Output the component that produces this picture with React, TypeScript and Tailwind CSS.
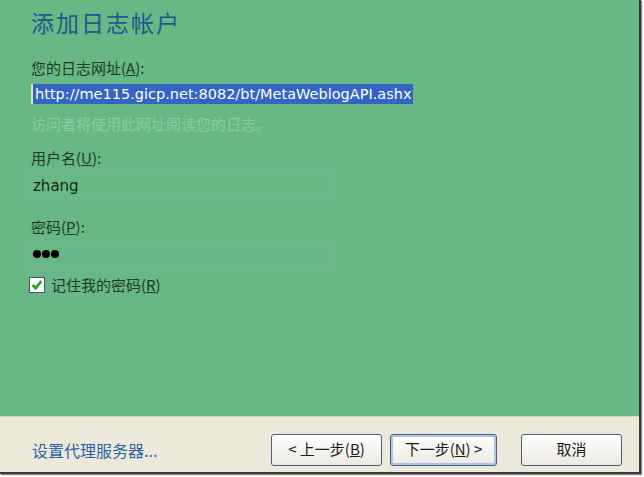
export default function App() {
  const font = { fontFamily: '"Noto Sans CJK SC", "Liberation Sans", sans-serif' };
  return (
    <div className="w-[644px] h-[477px] bg-white overflow-hidden" style={font}>
      <div className="w-[641px] h-[474px] flex flex-col border-r-2 border-b-2 border-[#3a3a3a] shadow-[1px_1px_1px_#888]">
        <div className="h-[416px] bg-[#68b886] pl-[31px] pt-[4px] flex flex-col">
          <h1 className="text-[23px] leading-[36px] text-[#1d5a8c] tracking-[2px]">添加日志帐户</h1>
          <div className="mt-[18px] text-[15px] leading-[20px] text-[#1e3a24]">
            您的日志网址(<span className="underline">A</span>):
          </div>
          <div className="mt-[6px] flex">
            <span className="bg-[#3464c4] text-white leading-[20px] pl-[2px] pr-[1px] border-l-2 border-[#e5e8a0]" style={{ fontFamily: '"DejaVu Sans", sans-serif', fontSize: '14.5px' }}>
              http://me115.gicp.net:8082/bt/MetaWeblogAPI.ashx
            </span>
          </div>
          <div className="mt-[10px] text-[15px] leading-[20px] text-[#8ccc9e]">访问者将使用此网址阅读您的日志。</div>
          <div className="mt-[14px] text-[15px] leading-[20px] text-[#1e3a24]">
            用户名(<span className="underline">U</span>):
          </div>
          <div className="mt-[4px] -ml-[4px] w-[306px] h-[28px] border border-[#74b0a0] flex items-center pl-[5px] text-[15px] text-[#15261a]" style={{ fontFamily: '"DejaVu Sans", sans-serif' }}>
            zhang
          </div>
          <div className="mt-[17px] text-[15px] leading-[20px] text-[#1e3a24]">
            密码(<span className="underline">P</span>):
          </div>
          <div className="mt-[3px] -ml-[4px] w-[306px] h-[28px] border border-[#74b0a0] flex items-center pl-[5px] gap-[1px]">
            <span className="w-[8px] h-[8px] rounded-full bg-black"></span>
            <span className="w-[8px] h-[8px] rounded-full bg-black"></span>
            <span className="w-[8px] h-[8px] rounded-full bg-black"></span>
          </div>
          <div className="mt-[7px] -ml-[2px] flex items-center gap-[6px] text-[15px] leading-[20px] text-[#1e3a24]">
            <span className="w-[16px] h-[16px] bg-white border border-[#3a5a70] flex items-center justify-center">
              <svg width="12" height="12" viewBox="0 0 11 11">
                <path d="M1.5 5.5 L4.3 8.5 L9.5 2" stroke="#21a121" strokeWidth="2.4" fill="none" />
              </svg>
            </span>
            <span>记住我的密码(<span className="underline">R</span>)</span>
          </div>
        </div>
        <div className="flex-1 bg-[#ede9da] border-t border-[#d6d2c0] flex items-center pl-[32px] pr-[17px]">
          <span className="text-[16px] text-[#2c62a8] flex-1 mt-[10px]">设置代理服务器...</span>
          <div className="flex gap-[8px] mt-[10px]">
            <button className="w-[111px] h-[32px] rounded-[3px] border border-[#4a5f78] bg-gradient-to-b from-white to-[#eceae2] text-[15px] text-[#1b1b1b]">
              &lt; 上一步(<span className="underline">B</span>)
            </button>
            <button className="w-[107px] h-[32px] rounded-[3px] border border-[#4a5f78] shadow-[inset_0_0_0_2px_#a8c4ea] bg-gradient-to-b from-white to-[#eceae2] text-[15px] text-[#1b1b1b]">
              下一步(<span className="underline">N</span>) &gt;
            </button>
            <button className="ml-[16px] w-[101px] h-[32px] rounded-[3px] border border-[#4a5f78] bg-gradient-to-b from-white to-[#eceae2] text-[15px] text-[#1b1b1b]">
              取消
            </button>
          </div>
        </div>
      </div>
    </div>
  );
}
